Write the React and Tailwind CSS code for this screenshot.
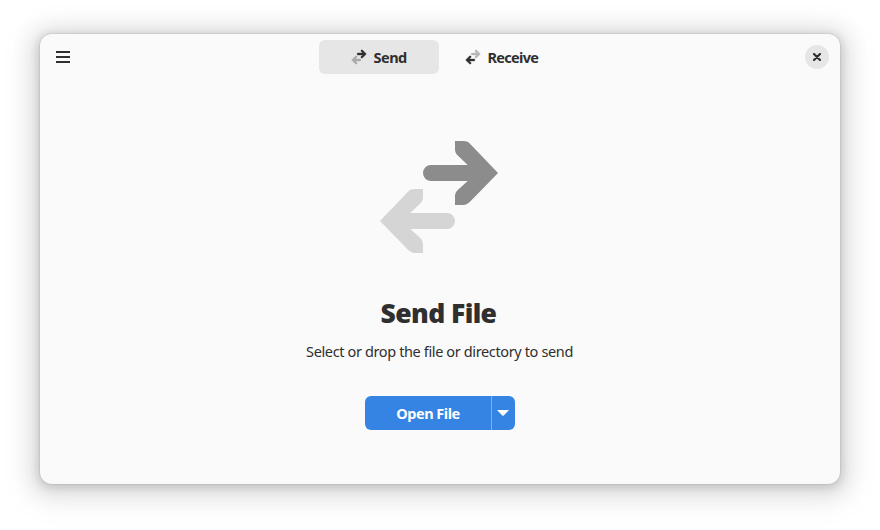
import React from "react";

function SwapIcon({ className, forward, backward, outline = 0 }) {
  return (
    <svg viewBox="0 0 128 128" className={className} strokeWidth={outline} aria-hidden="true">
      <path
        fill={forward}
        stroke={forward}
        d="M80 8h8.500c3 0 5 1.200 7 3.200L123 40 95 68.800c-2 2-4 3.200-7 3.200h-8v-9c0-2.300.9-4.200 2.500-5.800L92.700 48H56a8 8 0 0 1 0-16h36.700L82.500 22.200C80.900 20.500 80 18.500 80 16.200Z"
      />
      <path
        fill={backward}
        stroke={backward}
        d="M48 56h-8.500c-3 0-5 1.200-7 3.200L5 88l28 28.800c2 2 4 3.200 7 3.200h8v-9c0-2.300-.9-4.200-2.500-5.800L35.300 96H72a8 8 0 0 0 0-16H35.300l10.200-9.800c1.600-1.700 2.500-3.700 2.500-6Z"
      />
    </svg>
  );
}

function HeaderBar() {
  return (
    <header className="grid h-[46px] shrink-0 grid-cols-[1fr_auto_1fr] items-center pl-4 pr-[11px]">
      <button aria-label="Menu" className="flex h-[12px] w-[14px] flex-col justify-between">
        <span className="h-[2px] w-full bg-[#2f2f2f]" />
        <span className="h-[2px] w-full bg-[#2f2f2f]" />
        <span className="h-[2px] w-full bg-[#2f2f2f]" />
      </button>
      <nav className="-ml-[4px] mr-px flex gap-[3px] text-[14.5px] font-bold">
        <button className="flex h-[34px] w-[120px] items-center rounded-md bg-[#e6e6e6] pl-8">
          <SwapIcon className="mr-[7px] size-4" forward="#2f2f2f" backward="#a9a9a9" outline={3} />
          <span className="pt-0.5 tracking-[-0.5px]">Send</span>
        </button>
        <button className="flex h-[34px] w-[120px] items-center pl-[23px]">
          <SwapIcon className="mr-[7px] size-4" forward="#b6b6b6" backward="#2f2f2f" outline={3} />
          <span className="pt-0.5 tracking-[-0.7px]">Receive</span>
        </button>
      </nav>
      <button
        aria-label="Close"
        className="flex size-6 items-center justify-center justify-self-end rounded-full bg-[#e6e6e6]"
      >
        <svg viewBox="0 0 8 8" className="size-2">
          <path d="M1 1l6 6M7 1L1 7" stroke="#2f2f2f" strokeWidth="2.2" strokeLinecap="round" />
        </svg>
      </button>
    </header>
  );
}

export default function App() {
  return (
    <div className="h-[530px] w-[880px] overflow-hidden bg-white px-10 pt-[34px] font-['Noto_Sans','Open_Sans',sans-serif] text-[#2f2f2f]">
      <div className="flex h-[450px] w-[800px] flex-col rounded-xl bg-[#fafafa] shadow-[0_0_0_1px_rgba(0,0,0,0.05),0_2px_8px_2px_rgba(0,0,0,0.13),0_3px_20px_10px_rgba(0,0,0,0.09),0_6px_32px_16px_rgba(0,0,0,0.04)]">
        <HeaderBar />
        <main className="flex flex-col items-center pt-[53px]">
          <SwapIcon className="mr-0.5 size-32" forward="#8c8c8c" backward="#d5d5d5" />
          <h1 className="mr-[3px] mt-[34px] font-['Open_Sans','Noto_Sans',sans-serif] text-[26.5px] font-extrabold leading-9 tracking-[-0.6px]">
            Send File
          </h1>
          <p className="mr-px mt-[10px] text-[14.5px] leading-5 tracking-[-0.37px]">
            Select or drop the file or directory to send
          </p>
          <div className="mt-[35px] flex h-[34px] w-[150px] overflow-hidden rounded-md bg-[#3584e4] text-white">
            <button className="w-[126px] pt-0.5 text-[14.5px] font-bold tracking-[-0.5px]">Open File</button>
            <button
              aria-label="More options"
              className="flex flex-1 items-center justify-center border-l border-[#7fb1ee] pr-px"
            >
              <svg viewBox="0 0 12 6" className="h-1.5 w-3">
                <path d="M0 0h12L6.700 5.600a1 1 0 0 1-1.400 0Z" fill="#fff" />
              </svg>
            </button>
          </div>
        </main>
      </div>
    </div>
  );
}
